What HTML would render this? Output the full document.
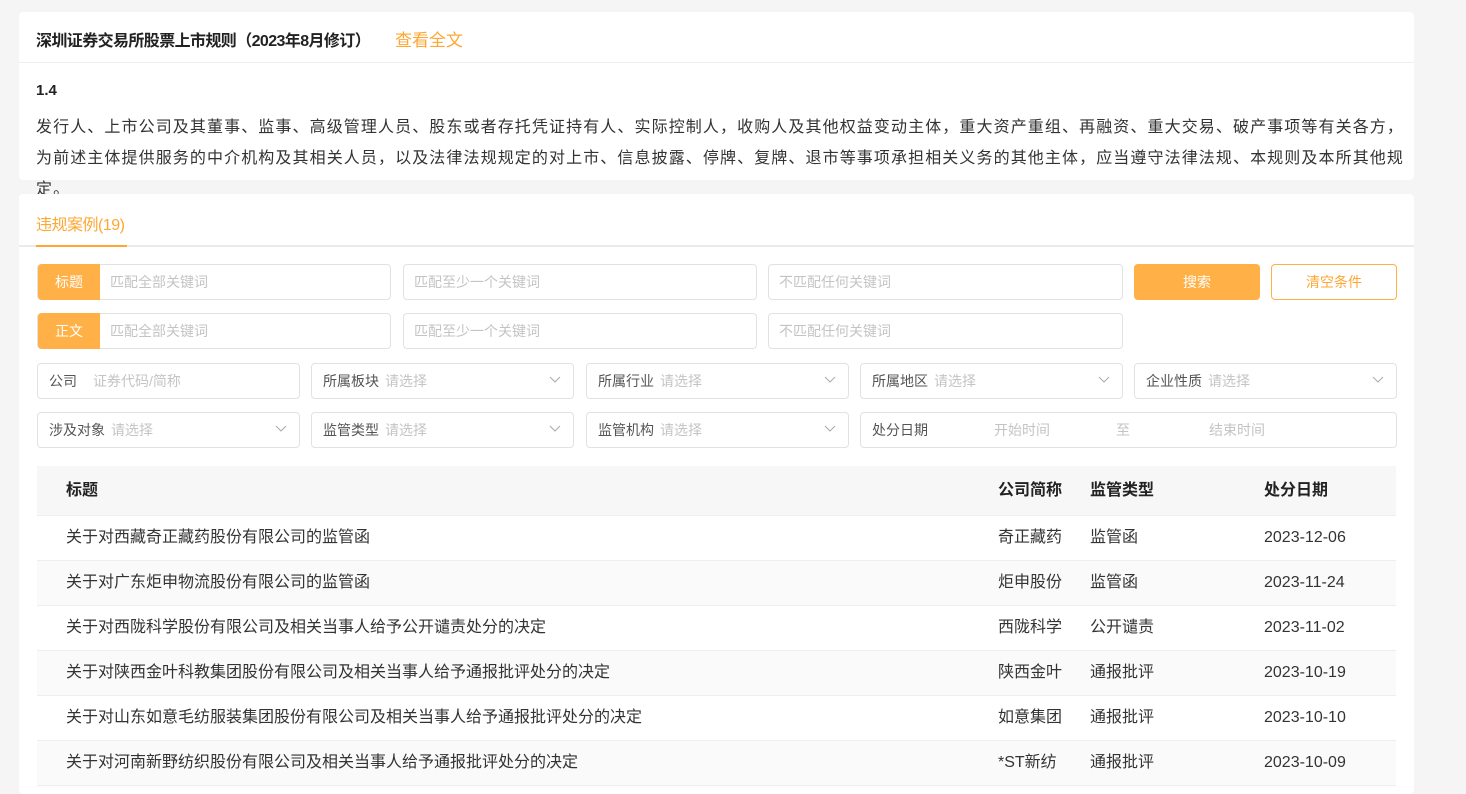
<!DOCTYPE html>
<html><head><meta charset="utf-8"><style>
*{box-sizing:border-box;margin:0;padding:0}
body{width:1466px;height:784px;overflow:hidden;background:#f5f5f5;font-family:"Liberation Sans","Noto Sans CJK SC",sans-serif;color:#333;position:relative}
.card{position:absolute;left:19px;width:1395px;background:#fff;border-radius:4px}
.a{position:absolute}
.inp{position:absolute;height:36px;border:1px solid #e2e2e2;border-radius:4px;font-size:14px;color:#c4c4c4;line-height:34px;padding-left:10px;background:#fff}
.lab{position:absolute;left:0;top:-1px;height:36px;width:62px;background:#ffb046;color:#fff;text-align:center;line-height:36px;border-radius:4px 0 0 4px}
.sel{position:absolute;height:36px;border:1px solid #e2e2e2;border-radius:4px;font-size:14px;line-height:34px;padding-left:11px;color:#555}
.sel span{color:#c4c4c4;margin-left:6px}
.sel svg{position:absolute;right:12px;top:12px}
.row{position:absolute;left:37px;width:1359px;height:45px;border-bottom:1px solid #eee;font-size:16px;line-height:44px;color:#333}
.row div{position:absolute;top:0}
</style></head><body>
<div class="card" style="top:12px;height:168px">
 <div class="a" style="left:17px;top:15px;font-size:16px;font-weight:bold;color:#222;letter-spacing:-0.6px">深圳证券交易所股票上市规则（2023年8月修订）</div>
 <div class="a" style="left:376px;top:14px;font-size:17px;color:#ffa733">查看全文</div>
 <div class="a" style="left:0;top:50px;width:1395px;height:1px;background:#eee"></div>
 <div class="a" style="left:17px;top:70px;font-size:15px;font-weight:bold;color:#222">1.4</div>
 <div class="a" style="left:17px;top:100px;width:1375px;font-size:16px;letter-spacing:1.1px;line-height:31px;color:#333">发行人、上市公司及其董事、监事、高级管理人员、股东或者存托凭证持有人、实际控制人，收购人及其他权益变动主体，重大资产重组、再融资、重大交易、破产事项等有关各方，为前述主体提供服务的中介机构及其相关人员，以及法律法规规定的对上市、信息披露、停牌、复牌、退市等事项承担相关义务的其他主体，应当遵守法律法规、本规则及本所其他规定。</div>
</div>
<div class="card" style="top:194px;height:600px">
 <div class="a" style="left:17px;top:17px;font-size:16px;color:#ffa733;letter-spacing:-0.5px">违规案例(19)</div>
 <div class="a" style="left:0;top:51px;width:1395px;height:2px;background:#e8eaec"></div>
 <div class="a" style="left:17px;top:51px;width:91px;height:2px;background:#ffa733"></div>
</div>
<div class="inp" style="left:37px;top:264px;width:354px;padding-left:72px"><div class="lab">标题</div>匹配全部关键词</div>
<div class="inp" style="left:403px;top:264px;width:354px">匹配至少一个关键词</div>
<div class="inp" style="left:768px;top:264px;width:355px">不匹配任何关键词</div>
<div class="a" style="left:1134px;top:264px;width:126px;height:36px;background:#ffb046;border-radius:4px;color:#fff;font-size:14px;text-align:center;line-height:36px">搜索</div>
<div class="a" style="left:1271px;top:264px;width:126px;height:36px;border:1px solid #ffb046;border-radius:4px;color:#ffa733;font-size:14px;text-align:center;line-height:34px">清空条件</div>
<div class="inp" style="left:37px;top:313px;width:354px;padding-left:72px"><div class="lab">正文</div>匹配全部关键词</div>
<div class="inp" style="left:403px;top:313px;width:354px">匹配至少一个关键词</div>
<div class="inp" style="left:768px;top:313px;width:355px">不匹配任何关键词</div>

<div class="sel" style="left:37px;top:363px;width:263px">公司<span style="margin-left:16px">证券代码/简称</span></div>
<div class="sel" style="left:311px;top:363px;width:263px">所属板块<span>请选择</span><svg width="12" height="8"><path d="M1 1l5 5 5-5" fill="none" stroke="#aaa"/></svg></div>
<div class="sel" style="left:586px;top:363px;width:263px">所属行业<span>请选择</span><svg width="12" height="8"><path d="M1 1l5 5 5-5" fill="none" stroke="#aaa"/></svg></div>
<div class="sel" style="left:860px;top:363px;width:263px">所属地区<span>请选择</span><svg width="12" height="8"><path d="M1 1l5 5 5-5" fill="none" stroke="#aaa"/></svg></div>
<div class="sel" style="left:1134px;top:363px;width:263px">企业性质<span>请选择</span><svg width="12" height="8"><path d="M1 1l5 5 5-5" fill="none" stroke="#aaa"/></svg></div>
<div class="sel" style="left:37px;top:412px;width:263px">涉及对象<span>请选择</span><svg width="12" height="8"><path d="M1 1l5 5 5-5" fill="none" stroke="#aaa"/></svg></div>
<div class="sel" style="left:311px;top:412px;width:263px">监管类型<span>请选择</span><svg width="12" height="8"><path d="M1 1l5 5 5-5" fill="none" stroke="#aaa"/></svg></div>
<div class="sel" style="left:586px;top:412px;width:263px">监管机构<span>请选择</span><svg width="12" height="8"><path d="M1 1l5 5 5-5" fill="none" stroke="#aaa"/></svg></div>
<div class="sel" style="left:860px;top:412px;width:537px">处分日期<span class="a" style="left:133px;margin:0">开始时间</span><span class="a" style="left:255px;margin:0">至</span><span class="a" style="left:348px;margin:0">结束时间</span></div>

<div class="row" style="top:466px;height:50px;background:#f7f7f7;font-weight:bold;line-height:49px;font-size:16px;color:#222">
 <div style="left:29px">标题</div><div style="left:961px">公司简称</div><div style="left:1053px">监管类型</div><div style="left:1227px">处分日期</div></div>
<div class="row" style="top:516px"><div style="left:29px">关于对西藏奇正藏药股份有限公司的监管函</div><div style="left:961px">奇正藏药</div><div style="left:1053px">监管函</div><div style="left:1227px">2023-12-06</div></div>
<div class="row" style="top:561px;background:#fafafa"><div style="left:29px">关于对广东炬申物流股份有限公司的监管函</div><div style="left:961px">炬申股份</div><div style="left:1053px">监管函</div><div style="left:1227px">2023-11-24</div></div>
<div class="row" style="top:606px"><div style="left:29px">关于对西陇科学股份有限公司及相关当事人给予公开谴责处分的决定</div><div style="left:961px">西陇科学</div><div style="left:1053px">公开谴责</div><div style="left:1227px">2023-11-02</div></div>
<div class="row" style="top:651px;background:#fafafa"><div style="left:29px">关于对陕西金叶科教集团股份有限公司及相关当事人给予通报批评处分的决定</div><div style="left:961px">陕西金叶</div><div style="left:1053px">通报批评</div><div style="left:1227px">2023-10-19</div></div>
<div class="row" style="top:696px"><div style="left:29px">关于对山东如意毛纺服装集团股份有限公司及相关当事人给予通报批评处分的决定</div><div style="left:961px">如意集团</div><div style="left:1053px">通报批评</div><div style="left:1227px">2023-10-10</div></div>
<div class="row" style="top:741px;background:#fafafa"><div style="left:29px">关于对河南新野纺织股份有限公司及相关当事人给予通报批评处分的决定</div><div style="left:961px">*ST新纺</div><div style="left:1053px">通报批评</div><div style="left:1227px">2023-10-09</div></div>
</body></html>
